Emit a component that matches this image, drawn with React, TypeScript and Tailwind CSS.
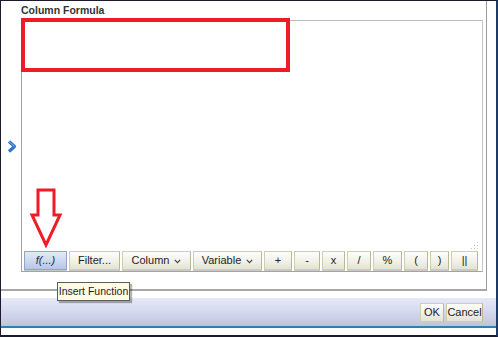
import type { ReactNode } from 'react';

const btn =
  'flex h-[19px] shrink-0 items-center justify-center border border-[#cfcfb0] border-r-[#b9b99a] bg-[linear-gradient(#fdfdfb,#f1f1ea_55%,#e2e2d6)] text-[11px] leading-none text-[#222] shadow-[0_1px_0_#c8c8c8]';

function Caret() {
  return (
    <svg width="7" height="5" viewBox="0 0 7 5" className="ml-[5px] mt-[2px]">
      <path d="M0.8 0.8 L3.5 3.6 L6.2 0.8" fill="none" stroke="#444" strokeWidth="1.2" />
    </svg>
  );
}

function Btn({ w, children }: { w: string; children: ReactNode }) {
  return <div className={`${btn} ${w}`}>{children}</div>;
}

export default function App() {
  return (
    <div className="relative flex h-[337px] w-[498px] flex-col overflow-hidden border-t border-l border-r-2 border-b-2 border-[#1c1b2e] border-r-[#1e3a66] bg-white font-['Liberation_Sans',Arial,sans-serif]">
      {/* formula panel */}
      <div className="flex h-[290px] w-[486px] shrink-0 border-r border-b-2 border-[#9c9c9c] border-b-[#a8a8a8]">
        <div className="flex w-[20px] shrink-0 items-center justify-center pl-[1px] pt-[2px]">
          <svg width="10" height="13" viewBox="0 0 10 13">
            <path d="M2 1.5 L7.5 6.5 L2 11.5" fill="none" stroke="#2f74c9" strokeWidth="3.2" strokeLinejoin="round" />
            <path d="M2 1.5 L7.5 6.5" fill="none" stroke="#7fb3ec" strokeWidth="1" />
          </svg>
        </div>
        <div className="flex flex-col pt-[2px]">
          <div className="text-[10.5px] leading-[14px] font-bold text-[#333]">Column Formula</div>
          <div className="relative mt-[3px] flex h-[252px] w-[462px] flex-col justify-end border border-[#a3a3a3] border-t-[#bdbdbd] border-r-[#c4c4c4] pb-[1px] pl-[2px]">
            <svg width="10" height="8" viewBox="0 0 10 8" className="absolute right-[2px] bottom-[21px]">
              <g fill="#c4c4c4">
                <rect x="7" y="0" width="1" height="1" />
                <rect x="4" y="3" width="1" height="1" />
                <rect x="7" y="3" width="1" height="1" />
                <rect x="1" y="6" width="1" height="1" />
                <rect x="4" y="6" width="1" height="1" />
                <rect x="7" y="6" width="1" height="1" />
              </g>
            </svg>
            <div className="flex gap-[2px]">
              <div className="flex h-[19px] w-[43px] shrink-0 items-center justify-center border border-[#8fa4c6] bg-[linear-gradient(#e3eaf7,#cbd7ec_55%,#b7c6e2)] text-[11px] leading-none text-[#1a2a4a] italic shadow-[0_1px_0_#c8c8c8]">
                f(...)
              </div>
              <Btn w="w-[51px]">Filter...</Btn>
              <Btn w="w-[69px]">
                Column
                <Caret />
              </Btn>
              <Btn w="w-[69px]">
                Variable
                <Caret />
              </Btn>
              <Btn w="w-[28px]">+</Btn>
              <Btn w="w-[26px]">-</Btn>
              <Btn w="w-[23px]">x</Btn>
              <Btn w="w-[24px]">/</Btn>
              <Btn w="w-[29px]">%</Btn>
              <Btn w="w-[24px]">(</Btn>
              <Btn w="w-[19px]">)</Btn>
              <Btn w="w-[27px]">||</Btn>
            </div>
          </div>
        </div>
      </div>

      <div className="h-[7px] shrink-0" />

      {/* dialog footer */}
      <div className="flex h-[28px] shrink-0 items-center justify-end gap-[2px] bg-[linear-gradient(#e6e9f8,#d6daf0_45%,#c9cce2_80%,#bfc2d8)] pr-[13px]">
        <Btn w="w-[24px] h-[16px] text-[10.5px]">OK</Btn>
        <Btn w="w-[37px] h-[16px] text-[10.5px]">Cancel</Btn>
      </div>
      <div className="h-[2px] shrink-0 bg-[#2f7fb2]" />
      <div className="flex-1" />

      {/* callouts */}
      <div className="absolute top-[17px] left-[20px] h-[54px] w-[269px] border-4 border-[#ee1c25]" />
      <svg width="34" height="60" viewBox="0 0 34 60" className="absolute top-[187px] left-[28px]">
        <path
          d="M9 2 L25 2 L25 27 L31 27 L17 57 L3 27 L9 27 Z"
          fill="#fff"
          stroke="#ee1c25"
          strokeWidth="3"
          strokeLinejoin="miter"
        />
      </svg>
      <div className="absolute top-[281px] left-[56px] flex h-[19px] w-[73px] items-center justify-center border border-[#5c5c5c] bg-[#fdfbe3] text-[10.5px] leading-none text-[#222] shadow-[2px_2px_1px_rgba(0,0,0,0.3)]">
        Insert Function
      </div>
    </div>
  );
}
